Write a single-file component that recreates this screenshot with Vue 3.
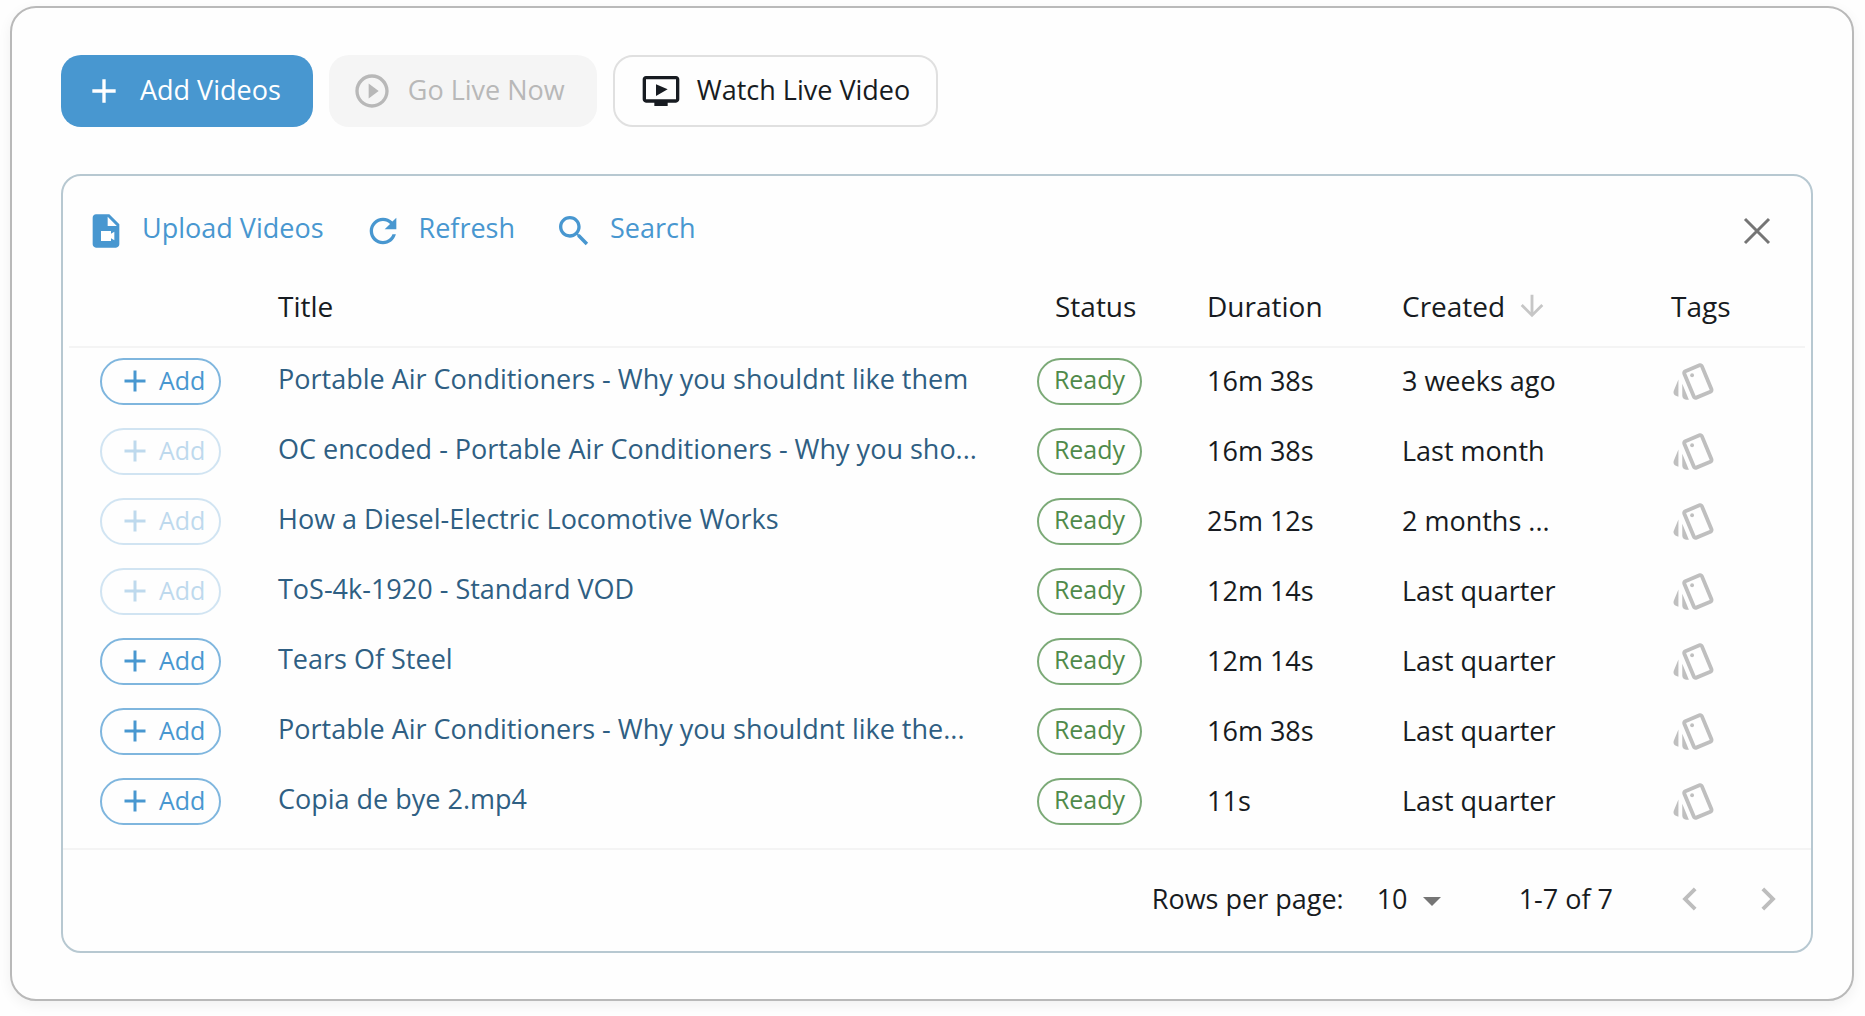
<template>
  <main class="page">
    <section class="card">
      <div class="actions">
        <button class="btn btn-primary" type="button">
          <svg class="icon" viewBox="0 0 24 24"><path :d="icons.plus" /></svg>
          <span>Add Videos</span>
        </button>
        <button class="btn btn-muted" type="button" disabled>
          <svg class="icon" viewBox="0 0 24 24"><path :d="icons.playCircle" /></svg>
          <span>Go Live Now</span>
        </button>
        <button class="btn btn-outline" type="button">
          <svg class="icon" viewBox="0 0 24 24"><path :d="icons.tv" /></svg>
          <span>Watch Live Video</span>
        </button>
      </div>

      <div class="panel">
        <div class="toolbar">
          <button v-for="tool in tools" :key="tool.label" class="tool" type="button">
            <svg class="icon" viewBox="0 0 24 24"><path :d="icons[tool.icon]" /></svg>
            <span>{{ tool.label }}</span>
          </button>
          <button class="close" type="button" aria-label="Close">
            <svg class="close-icon" viewBox="0 0 28 28"><path d="M2 2L26 26M26 2L2 26" /></svg>
          </button>
        </div>

        <div class="table-wrap">
          <table class="videos">
            <thead>
              <tr>
                <th class="col-add"></th>
                <th>Title</th>
                <th class="col-status">Status</th>
                <th class="col-duration">Duration</th>
                <th class="col-created">
                  <span class="sort">
                    Created
                    <svg class="sort-icon" viewBox="0 0 24 24"><path :d="icons.arrowDown" /></svg>
                  </span>
                </th>
                <th class="col-tags">Tags</th>
              </tr>
            </thead>
            <tbody>
              <tr v-for="(video, idx) in videos" :key="idx">
                <td class="cell-add">
                  <button class="add" type="button" :disabled="video.added">
                    <svg class="add-icon" viewBox="0 0 24 24"><path :d="icons.plus" /></svg>
                    <span>Add</span>
                  </button>
                </td>
                <td class="cell-title"><a href="#">{{ video.title }}</a></td>
                <td class="cell-status"><span class="badge">Ready</span></td>
                <td>{{ video.duration }}</td>
                <td>{{ video.created }}</td>
                <td class="cell-tags">
                  <button class="tags" type="button" aria-label="Tags">
                    <svg class="tags-icon" viewBox="0 0 24 24"><path :d="icons.style" /><circle cx="11" cy="9" r="1" /></svg>
                  </button>
                </td>
              </tr>
            </tbody>
          </table>
        </div>

        <div class="pager">
          <label for="rowsPerPage">Rows per page:</label>
          <div class="select-box">
            <select id="rowsPerPage" v-model="rowsPerPage">
              <option v-for="n in [10, 25, 50]" :key="n" :value="n">{{ n }}</option>
            </select>
            <svg class="caret" viewBox="0 0 20 10"><path d="M0 0h20L10 10z" /></svg>
          </div>
          <span class="range">1-7 of 7</span>
          <button class="page-btn" type="button" aria-label="Previous page" disabled>
            <svg class="chevron" viewBox="0 0 24 24"><path :d="icons.chevronLeft" /></svg>
          </button>
          <button class="page-btn" type="button" aria-label="Next page" disabled>
            <svg class="chevron" viewBox="0 0 24 24"><path :d="icons.chevronRight" /></svg>
          </button>
        </div>
      </div>
    </section>
  </main>
</template>

<script setup>
import {ref} from "vue";

const rowsPerPage = ref(10);

const tools = [
  {label: "Upload Videos", icon: "fileVideo"},
  {label: "Refresh", icon: "refresh"},
  {label: "Search", icon: "search"},
];

const videos = ref([
  {title: "Portable Air Conditioners - Why you shouldnt like them", duration: "16m 38s", created: "3 weeks ago", added: false},
  {title: "OC encoded - Portable Air Conditioners - Why you sho...", duration: "16m 38s", created: "Last month", added: true},
  {title: "How a Diesel-Electric Locomotive Works", duration: "25m 12s", created: "2 months ...", added: true},
  {title: "ToS-4k-1920 - Standard VOD", duration: "12m 14s", created: "Last quarter", added: true},
  {title: "Tears Of Steel", duration: "12m 14s", created: "Last quarter", added: false},
  {title: "Portable Air Conditioners - Why you shouldnt like the...", duration: "16m 38s", created: "Last quarter", added: false},
  {title: "Copia de bye 2.mp4", duration: "11s", created: "Last quarter", added: false},
]);

const icons = {
  plus: "M19 13h-6v6h-2v-6H5v-2h6V5h2v6h6v2z",
  playCircle:
    "M10 16.5l6-4.5-6-4.5v9zM12 2C6.48 2 2 6.48 2 12s4.48 10 10 10 10-4.48 10-10S17.52 2 12 2zm0 18c-4.41 0-8-3.59-8-8s3.59-8 8-8 8 3.59 8 8-3.59 8-8 8z",
  tv: "M21 3H3c-1.11 0-2 .89-2 2v12c0 1.1.89 2 2 2h5v2h8v-2h5c1.1 0 1.99-.9 1.99-2L23 5c0-1.11-.9-2-2-2zm0 14H3V5h18v12zM9 8v7l7-4z",
  fileVideo:
    "M14 2H6c-1.1 0-2 .9-2 2v16c0 1.1.9 2 2 2h12c1.1 0 2-.9 2-2V8l-6-6zM13 9V3.5L18.5 9H13zM15 13.7l2-1.2v5l-2-1.2V18H9v-6h6v1.7z",
  refresh:
    "M17.65 6.35C16.2 4.9 14.21 4 12 4c-4.42 0-7.99 3.58-7.99 8s3.57 8 7.99 8c3.73 0 6.84-2.55 7.73-6h-2.08c-.82 2.33-3.04 4-5.65 4-3.31 0-6-2.69-6-6s2.69-6 6-6c1.66 0 3.14.69 4.22 1.78L13 11h7V4l-2.35 2.35z",
  search:
    "M15.5 14h-.79l-.28-.27C15.41 12.59 16 11.11 16 9.5 16 5.91 13.09 3 9.5 3S3 5.91 3 9.5 5.91 16 9.5 16c1.61 0 3.09-.59 4.23-1.57l.27.28v.79l5 4.99L20.49 19l-4.99-5zm-6 0C7.01 14 5 11.99 5 9.5S7.01 5 9.5 5 14 7.01 14 9.5 11.99 14 9.5 14z",
  arrowDown: "M20 12l-1.41-1.41L13 16.17V4h-2v12.17l-5.58-5.59L4 12l8 8 8-8z",
  style:
    "M2.53 19.65l1.34.56v-9.03l-2.43 5.86c-.41 1.02.08 2.19 1.09 2.61zm19.5-3.7L17.07 3.98c-.31-.75-1.04-1.21-1.81-1.23-.26 0-.53.04-.79.15L7.1 5.95c-.75.31-1.21 1.03-1.23 1.8-.01.27.04.54.15.8l4.96 11.97c.31.76 1.05 1.22 1.83 1.23.26 0 .52-.05.77-.15l7.36-3.05c1.02-.42 1.51-1.59 1.09-2.6zm-9.2 3.8L7.87 7.79l7.35-3.04h.01l4.95 11.95-7.35 3.05zM5.88 19.75c0 1.1.9 2 2 2h1.45l-3.45-8.34v6.34z",
  chevronLeft: "M15.41 7.41L14 6l-6 6 6 6 1.41-1.41L10.83 12z",
  chevronRight: "M10 6L8.59 7.41 13.17 12l-4.58 4.59L10 18l6-6z",
};
</script>

<style>
body {
  background: #fefefe;
}
</style>

<style scoped>
.page {
  padding: 6px 11px 14px 10px;
  font-family: "Open Sans", "Noto Sans", sans-serif;
  font-size: 27px;
  line-height: 38px;
  color: #171b21;
}
.card {
  border: 2px solid #b9b9b9;
  border-radius: 26px;
  padding: 47px 39px 46px 49px;
  background: #fefefe;
  box-shadow: 0 4px 14px rgba(0, 0, 0, 0.06);
}
button {
  font: inherit;
  color: inherit;
  background: none;
  border: none;
  padding: 0;
  cursor: pointer;
}
button:disabled {
  cursor: default;
}
svg {
  display: block;
  flex-shrink: 0;
  fill: currentColor;
}
.icon {
  width: 40px;
  height: 40px;
}

/* top buttons */
.actions {
  display: flex;
  gap: 16px;
  margin-bottom: 47px;
}
.btn {
  display: flex;
  align-items: center;
  gap: 16px;
  height: 72px;
  padding: 0 32px 0 23px;
  border-radius: 20px;
}
.btn span {
  padding-bottom: 2px;
}
.btn-primary {
  background: #4897d0;
  color: #fff;
}
.btn-muted {
  background: #f5f5f5;
  color: #b8b8b8;
}
.btn-outline {
  border: 2px solid #e0e0e0;
  padding: 0 26px;
}

/* panel */
.panel {
  border: 2px solid #b7c8d1;
  border-radius: 20px;
}
.toolbar {
  display: flex;
  align-items: center;
  gap: 39px;
  padding: 19px 30px 0 23px;
  height: 72px;
}
.tool {
  display: flex;
  align-items: center;
  gap: 16px;
  color: #4897d0;
}
.tool span {
  padding-bottom: 6px;
}
.close {
  margin-left: auto;
  padding: 10px;
  color: #757575;
}
.close-icon {
  width: 28px;
  height: 28px;
  fill: none;
  stroke: currentColor;
  stroke-width: 3;
}

/* table */
.table-wrap {
  padding: 0 6px;
}
.videos {
  width: 100%;
  table-layout: fixed;
  border-collapse: separate;
  border-spacing: 0;
}
.videos th {
  height: 81px;
  box-sizing: border-box;
  padding: 0 0 2px;
  border-bottom: 2px solid #f4f4f4;
  font-size: 28px;
  font-weight: 500;
  text-align: left;
}
.videos td {
  height: 70px;
  box-sizing: border-box;
  padding: 0 0 4px;
  white-space: nowrap;
}
.col-add {
  width: 209px;
}
.col-status {
  width: 170px;
}
.videos .col-status {
  padding-left: 18px;
}
.col-duration {
  width: 195px;
}
.col-created {
  width: 269px;
}
.col-tags {
  width: 134px;
}
.videos .cell-add {
  padding-left: 31px;
}
.videos .cell-title {
  padding-bottom: 8px;
}
.cell-title a {
  color: #2f5f83;
  text-decoration: none;
}
.sort {
  display: flex;
  align-items: center;
  gap: 10px;
}
.sort-icon {
  width: 34px;
  height: 34px;
  color: #c6c6c6;
}
.add {
  display: flex;
  align-items: center;
  gap: 6px;
  box-sizing: border-box;
  width: 121px;
  height: 47px;
  padding-left: 15px;
  border: 2px solid #7fb6de;
  border-radius: 24px;
  color: #4897d0;
  font-size: 25px;
}
.add:disabled {
  opacity: 0.35;
}
.add-icon {
  width: 36px;
  height: 36px;
}
.add span {
  padding-bottom: 3px;
}
.badge {
  display: flex;
  justify-content: center;
  box-sizing: border-box;
  width: 105px;
  height: 47px;
  border: 2px solid #7caa78;
  border-radius: 24px;
  color: #4f8a4a;
  font-size: 25px;
}
.tags {
  display: block;
  color: #bfbfbf;
}
.tags-icon {
  width: 46px;
  height: 46px;
}

/* pagination */
.pager {
  display: flex;
  align-items: center;
  justify-content: flex-end;
  height: 98px;
  margin-top: 10px;
  padding: 0 20px 3px 0;
  border-top: 2px solid #f4f4f4;
}
.select-box {
  position: relative;
  margin: 0 78px 0 33px;
}
.select-box select {
  appearance: none;
  width: 64px;
  padding: 0;
  border: none;
  background: none;
  font: inherit;
  color: inherit;
  cursor: pointer;
}
.caret {
  position: absolute;
  right: 0;
  top: 17px;
  width: 18px;
  height: 9px;
  color: #757575;
  pointer-events: none;
}
.range {
  margin-right: 54px;
}
.page-btn {
  color: #bdbdbd;
}
.page-btn + .page-btn {
  margin-left: 32px;
}
.chevron {
  width: 46px;
  height: 46px;
}
</style>
